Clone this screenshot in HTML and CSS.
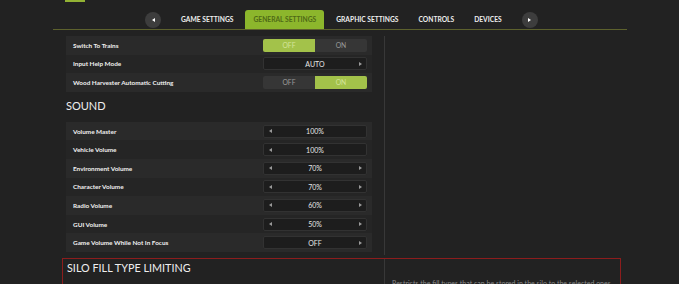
FILE: index.html
```html
<!doctype html>
<html>
<head>
  <link rel="stylesheet" href="styles.css">
</head>
<body>

  <div class="top">
    <div class="topMark"></div>
  </div>

  <div class="tabs">
    <button class="arrowBtn"><svg width="3" height="4" viewBox="0 0 3 4"><polygon points="3,0 0,2 3,4" fill="#ffffff"/></svg></button>
    <div class="tab">GAME SETTINGS</div>
    <div class="tab active">GENERAL SETTINGS</div>
    <div class="tab">GRAPHIC SETTINGS</div>
    <div class="tab">CONTROLS</div>
    <div class="tab">DEVICES</div>
    <button class="arrowBtn"><svg width="3" height="4" viewBox="0 0 3 4"><polygon points="0,0 3,2 0,4" fill="#ffffff"/></svg></button>
  </div>

  <div class="main">

    <div class="section">
      <div class="left firstLeft">
        <div class="row lite">
          <span class="label">Switch To Trains</span>
          <div class="toggle"><span class="half on">OFF</span><span class="half">ON</span></div>
        </div>
        <div class="row">
          <span class="label">Input Help Mode</span>
          <div class="select"><span class="slot"></span><span class="value">AUTO</span><span class="slot"><svg class="tri" width="3" height="4" viewBox="0 0 3 4"><polygon points="0,0 3,2 0,4"/></svg></span></div>
        </div>
        <div class="row lite">
          <span class="label">Wood Harvester Automatic Cutting</span>
          <div class="toggle"><span class="half">OFF</span><span class="half on">ON</span></div>
        </div>

        <h2 class="heading">SOUND</h2>

        <div class="row lite">
          <span class="label">Volume Master</span>
          <div class="select"><span class="slot"><svg class="tri" width="3" height="4" viewBox="0 0 3 4"><polygon points="3,0 0,2 3,4"/></svg></span><span class="value">100%</span><span class="slot"></span></div>
        </div>
        <div class="row">
          <span class="label">Vehicle Volume</span>
          <div class="select"><span class="slot"><svg class="tri" width="3" height="4" viewBox="0 0 3 4"><polygon points="3,0 0,2 3,4"/></svg></span><span class="value">100%</span><span class="slot"></span></div>
        </div>
        <div class="row lite">
          <span class="label">Environment Volume</span>
          <div class="select"><span class="slot"><svg class="tri" width="3" height="4" viewBox="0 0 3 4"><polygon points="3,0 0,2 3,4"/></svg></span><span class="value">70%</span><span class="slot"><svg class="tri" width="3" height="4" viewBox="0 0 3 4"><polygon points="0,0 3,2 0,4"/></svg></span></div>
        </div>
        <div class="row">
          <span class="label">Character Volume</span>
          <div class="select"><span class="slot"><svg class="tri" width="3" height="4" viewBox="0 0 3 4"><polygon points="3,0 0,2 3,4"/></svg></span><span class="value">70%</span><span class="slot"><svg class="tri" width="3" height="4" viewBox="0 0 3 4"><polygon points="0,0 3,2 0,4"/></svg></span></div>
        </div>
        <div class="row lite">
          <span class="label">Radio Volume</span>
          <div class="select"><span class="slot"><svg class="tri" width="3" height="4" viewBox="0 0 3 4"><polygon points="3,0 0,2 3,4"/></svg></span><span class="value">60%</span><span class="slot"><svg class="tri" width="3" height="4" viewBox="0 0 3 4"><polygon points="0,0 3,2 0,4"/></svg></span></div>
        </div>
        <div class="row">
          <span class="label">GUI Volume</span>
          <div class="select"><span class="slot"><svg class="tri" width="3" height="4" viewBox="0 0 3 4"><polygon points="3,0 0,2 3,4"/></svg></span><span class="value">50%</span><span class="slot"><svg class="tri" width="3" height="4" viewBox="0 0 3 4"><polygon points="0,0 3,2 0,4"/></svg></span></div>
        </div>
        <div class="row lite">
          <span class="label">Game Volume While Not In Focus</span>
          <div class="select"><span class="slot"></span><span class="value">OFF</span><span class="slot"><svg class="tri" width="3" height="4" viewBox="0 0 3 4"><polygon points="0,0 3,2 0,4"/></svg></span></div>
        </div>
      </div>
      <div class="right"></div>
    </div>

    <div class="section silo">
      <div class="left">
        <h2 class="heading siloHeading">SILO FILL TYPE LIMITING</h2>
      </div>
      <div class="right">
        <p class="help">Restricts the fill types that can be stored in the silo to the selected ones.</p>
      </div>
    </div>

  </div>

</body>
</html>
```

FILE: styles.css
```css
body{
  margin: 0;
  background-color: #222222;
  font-family: Lato, 'Open Sans', sans-serif;
  color: #e8e8e8;
  overflow: hidden;
}

.top{
  height: 10px;
  padding-left: 65px;
}
.topMark{
  width: 20px;
  height: 2px;
  background-color: #93b234;
}

.tabs{
  display: flex;
  align-items: flex-end;
  gap: 4px;
  height: 19px;
  margin: 0 52px 0 53px;
  padding-left: 84px;
  border-bottom: 1px solid #5d612d;
}
.tab{
  height: 19px;
  line-height: 19px;
  padding: 0 8px;
  font-size: 6.7px;
  font-weight: bold;
  color: #eeeeee;
  border-radius: 3px 3px 0 0;
}
.tab.active{
  background-color: #8cb62c;
  color: #4f6a16;
}
.arrowBtn{
  align-self: center;
  display: flex;
  align-items: center;
  justify-content: center;
  width: 16px;
  height: 16px;
  margin: 0 8px;
  padding: 0;
  border: none;
  border-radius: 50%;
  background-color: #3d3d3d;
}

.tri{
  display: block;
  fill: #9a9a9a;
}

.main{
  margin-left: 62px;
  width: 559px;
}
.section{
  display: flex;
}
.left{
  width: 322px;
}
.firstLeft{
  padding-top: 6px;
  padding-bottom: 3px;
}
.right{
  flex: 1;
  border-left: 1px solid #383838;
  margin-top: 6px;
}

.row{
  display: flex;
  align-items: center;
  justify-content: space-between;
  height: 18.6px;
  margin-left: 4px;
  width: 306px;
  padding: 0 5px 0 7px;
  box-sizing: border-box;
  background-color: #252525;
}
.row.lite{
  background-color: #2a2a2a;
}
.label{
  font-size: 6.4px;
  font-weight: bold;
  color: #f0f0f0;
}

.toggle{
  display: flex;
  width: 104px;
  height: 13px;
  background-color: #363636;
  border-radius: 2px;
  overflow: hidden;
}
.half{
  flex: 1;
  text-align: center;
  line-height: 13px;
  font-size: 6.8px;
  color: #9a9a9a;
}
.half.on{
  background-color: #a3c24a;
  color: #d4e49a;
}

.select{
  display: grid;
  grid-template-columns: 12px 1fr 12px;
  align-items: center;
  width: 104px;
  height: 13px;
  box-sizing: border-box;
  background-color: #1d1d1d;
  border: 1px solid #323232;
  border-radius: 2px;
}
.slot{
  display: flex;
  justify-content: center;
  align-items: center;
}
.select .value{
  text-align: center;
  font-size: 7px;
  color: #e6e6e6;
}

.heading{
  margin: 0;
  height: 30px;
  line-height: 28px;
  padding-left: 4px;
  font-size: 11px;
  font-weight: normal;
  color: #eeeeee;
}

.silo{
  margin-top: 3px;
  height: 40px;
  border: 1px solid #8c1d1d;
  border-bottom: none;
  box-sizing: border-box;
}
.silo .left{
  width: 321px;
}
.silo .right{
  margin-top: 0;
}
.siloHeading{
  height: 20px;
  line-height: 18px;
  font-size: 10.8px;
}
.help{
  margin: 20px 0 0 7px;
  font-size: 7px;
  color: #8a8a8a;
}
```
